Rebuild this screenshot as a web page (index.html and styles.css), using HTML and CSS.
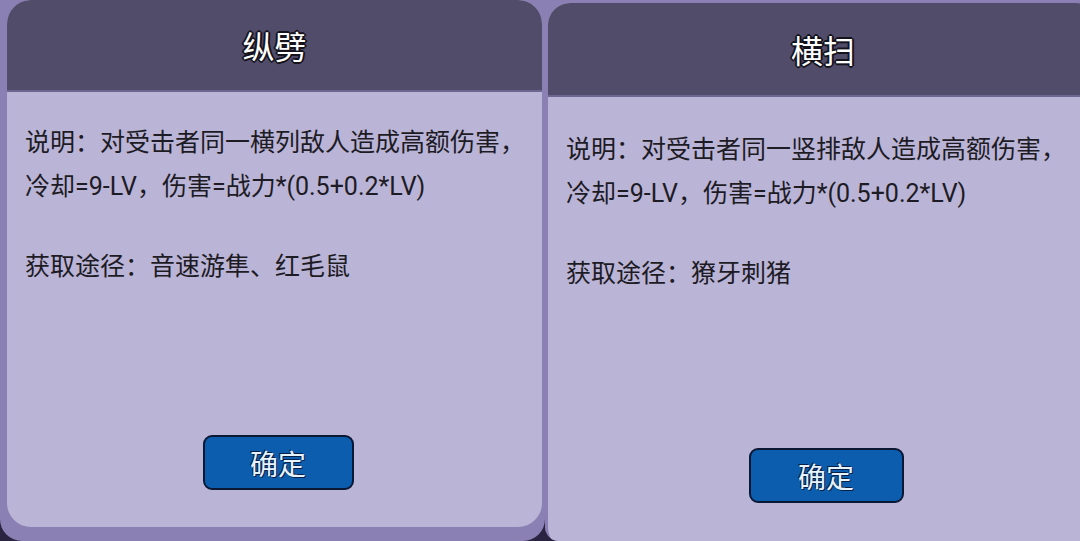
FILE: index.html
```html
<!DOCTYPE html>
<html lang="zh-CN">
<head>
    <meta charset="UTF-8">
    <meta name="viewport" content="width=device-width, initial-scale=1.0">
    <title>技能说明</title>
    <link rel="stylesheet" href="styles.css">
</head>
<body>
    <div class="page">
        <!-- 技能：纵劈 -->
        <div class="screen screen-left">
            <div class="skill-dialog">
                <div class="dialog-header">
                    <h2 class="skill-name">纵劈</h2>
                </div>
                <div class="dialog-body">
                    <p class="skill-desc">说明：对受击者同一横列敌人造成高额伤害，<br>冷却=9-LV，伤害=战力*(0.5+0.2*LV)</p>
                    <p class="skill-source">获取途径：音速游隼、红毛鼠</p>
                    <button class="ok-btn">确定</button>
                </div>
            </div>
        </div>

        <!-- 技能：横扫 -->
        <div class="screen screen-right">
            <div class="skill-dialog">
                <div class="dialog-header">
                    <h2 class="skill-name">横扫</h2>
                </div>
                <div class="dialog-body">
                    <p class="skill-desc">说明：对受击者同一竖排敌人造成高额伤害，<br>冷却=9-LV，伤害=战力*(0.5+0.2*LV)</p>
                    <p class="skill-source">获取途径：獠牙刺猪</p>
                    <button class="ok-btn">确定</button>
                </div>
            </div>
        </div>
    </div>
</body>
</html>
```

FILE: styles.css
```css
* {
    box-sizing: border-box;
}

body {
    margin: 0;
    padding: 0;
    font-family: Roboto, "Noto Sans CJK SC", sans-serif;
    background-color: #2a2440;
    overflow: hidden;
}

.page {
    display: flex;
    width: 1080px;
    height: 541px;
    overflow: hidden;
}

.screen {
    background-color: #8b80b4;
    overflow: hidden;
    display: flex;
}

.screen-left {
    width: 545px;
    height: 541px;
    padding: 0 3px 14px 7px;
    border-radius: 0 0 22px 22px;
}

.screen-right {
    flex: 1;
    height: 541px;
    padding: 3px 0 0 3px;
    border-radius: 0 0 0 14px;
}

.skill-dialog {
    display: flex;
    flex-direction: column;
    background-color: #bab4d7;
    border-radius: 24px;
    overflow: hidden;
}

.screen-left .skill-dialog {
    width: 535px;
    height: 527px;
}

.screen-right .skill-dialog {
    flex: none;
    width: 550px;
    height: 548px;
    border-radius: 22px 22px 0 24px;
}

.dialog-header {
    height: 92px;
    background-color: #524c6b;
    border-bottom: 2px solid #6c6690;
    display: flex;
    align-items: center;
    justify-content: center;
}

.screen-right .dialog-header {
    height: 94px;
}

.skill-name {
    margin: 0;
    font-size: 32px;
    font-weight: 400;
    color: #ffffff;
    text-shadow: 2px 0 0 #15131c, -2px 0 0 #15131c, 0 2px 0 #15131c, 0 -2px 0 #15131c,
                 1px 1px 0 #15131c, -1px -1px 0 #15131c, 1px -1px 0 #15131c, -1px 1px 0 #15131c;
}

.dialog-body {
    flex: 1;
    display: flex;
    flex-direction: column;
    padding: 29px 18px 37px;
    color: #1d1b24;
    font-size: 25px;
    line-height: 44px;
}

.screen-right .dialog-body {
    padding: 31px 20px 48px 18px;
}

.skill-desc,
.skill-source {
    margin: 0;
    white-space: nowrap;
}

.skill-source {
    margin-top: 36px;
}

.ok-btn {
    margin-top: auto;
    align-self: center;
    width: 151px;
    height: 55px;
    background-color: #0c5dad;
    border: 2px solid #0a1834;
    border-radius: 9px;
    font-family: Roboto, "Noto Sans CJK SC", sans-serif;
    font-size: 28px;
    color: #e4f3ff;
    text-shadow: 1px 1px 0 #0a1f44, -1px -1px 0 #0a1f44;
    cursor: pointer;
}

.screen-left .ok-btn {
    margin-left: 7px;
}

.screen-right .ok-btn {
    width: 155px;
    margin-left: 8px;
}
```
